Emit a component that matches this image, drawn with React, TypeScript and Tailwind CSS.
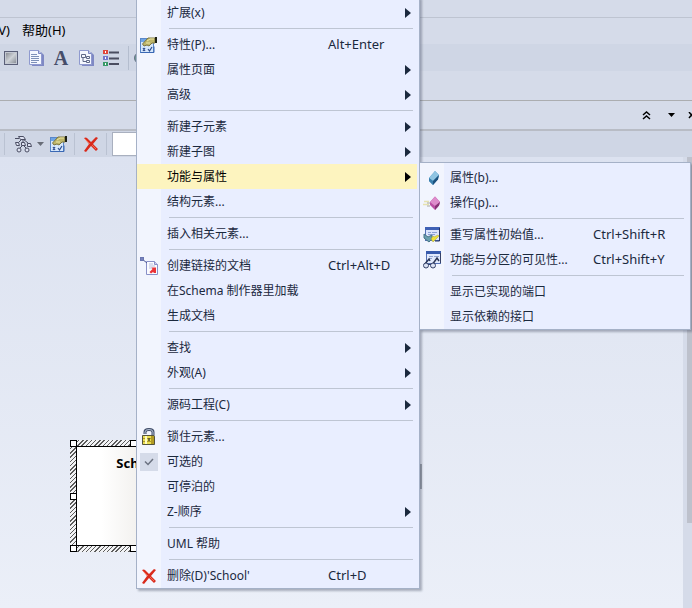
import React from 'react';

interface MenuEntry {
  label: string;
  shortcut?: string;
  submenu?: boolean;
  active?: boolean;
  checked?: boolean;
  icon?: React.ReactNode;
}

const PropertiesIcon = () => (
  <svg className="w-[18px] h-[18px]" viewBox="0 0 18 18">
    <rect x="0.5" y="2.5" width="13" height="14" fill="#d6e7fb" stroke="#5a87c8" />
    <rect x="1" y="3" width="12" height="3" fill="#6ea4e6" />
    <path d="M3 12l2 3M5 12l-2 3M8 13l1.500 2L12 11" stroke="#2c4a8c" fill="none" strokeWidth="1.200" />
    <path d="M2.500 8L8 2h7v5h-3l-3 3-2-1-3 1z" fill="#bdb56a" stroke="#7d7640" />
    <path d="M7 5l3-2h4M6 7h4" stroke="#ece6a4" fill="none" />
    <rect x="15" y="1" width="2" height="6" fill="#1d2014" />
    <path d="M0.500 16.500h13.500v-6" stroke="#3a68b4" fill="none" />
  </svg>
);

const LinkedDocIcon = () => (
  <svg className="w-[18px] h-[18px]" viewBox="0 0 18 18">
    <path d="M6.500 4.500h8l3 3v10h-11z" fill="#fafbff" stroke="#8990c8" />
    <path d="M14.500 4.500v3h3" fill="#c8cdf0" stroke="#8990c8" />
    <path d="M9 7h4M9 9h6M9 11h3" stroke="#b9bfdc" />
    <path d="M2 2l5 4" stroke="#4a5590" />
    <rect x="0.5" y="0.5" width="3" height="3" fill="#7783bd" stroke="#6a76b0" />
    <path d="M16 10.500v5.500h-2l-1-1-2 1.500-1.500-1.500 3-3-1-1.500z" fill="#ea3338" />
  </svg>
);

const LockIcon = () => (
  <svg className="w-[18px] h-[18px]" viewBox="0 0 18 18">
    <path d="M5 6V4q0-2.500 4-2.500T13 4v6" fill="none" stroke="#3f4c68" strokeWidth="3" />
    <path d="M5 6V4q0-2.500 4-2.500T13 4v3" fill="none" stroke="#b4c0d4" />
    <path d="M2.500 7.500h11l1 1v8h-12z" fill="#b39c22" stroke="#55543c" />
    <path d="M3 8h8v8H3z" fill="#eadf52" />
    <path d="M3 10.500h10M3 13.500h10" stroke="#b19b28" />
    <path d="M6 8v8" stroke="#fffcc1" strokeWidth="2" />
    <path d="M9 10v3" stroke="#4b4a30" strokeWidth="1.500" />
  </svg>
);

const DeleteIcon = () => (
  <svg className="w-4 h-4" viewBox="0 0 16 16">
    <path d="M1 2q2-1 3 0l4 4 5-5 2 1-5 6 5 5-2 2-5-5-5 6-2-1 5-7z" fill="#d92a1c" />
    <path d="M2 3l5 5M9 9l4 4" stroke="#f56a50" />
  </svg>
);

const AttributeIcon = () => (
  <svg className="w-[18px] h-[18px]" viewBox="0 0 18 18">
    <path d="M6 9l6-7 4 4-1 4-5 6-4-4z" fill="#4a94c2" />
    <path d="M6 9l6-7 4 4-6 6z" fill="#8fc4e2" />
    <path d="M10 12l6-6-1 4.500-5 5.500z" fill="#1c527f" />
    <path d="M6 9l4 3v4l-4-4z" fill="#3b80ae" />
  </svg>
);

const OperationIcon = () => (
  <svg className="w-[18px] h-[18px]" viewBox="0 0 18 18">
    <path d="M1 7.500h5M0 10.500h6" stroke="#e6e2ae" strokeWidth="1.500" />
    <path d="M4 9h4M4 12h3" stroke="#a9aaa2" />
    <path d="M7 8l5-5.500 5 5.500-1 3.500-4 4.500-5-5z" fill="#bc4fa5" />
    <path d="M7 8l5-5.500L17 8l-5 4z" fill="#dd8ccb" />
    <path d="M12 12l5-4-1 3.500-4 4.500z" fill="#863375" />
  </svg>
);

const InitValueIcon = () => (
  <svg className="w-[18px] h-[18px]" viewBox="0 0 18 18">
    <rect x="2.500" y="1.500" width="14" height="13" fill="#dce5fb" stroke="#5470b4" />
    <rect x="2" y="1" width="15" height="3" fill="#3f61b5" />
    <path d="M5 6.500h3M9 6.500h5M5 8.500h7" stroke="#8ba1d6" />
    <path d="M1 8l4 3 4-2v4l-3 3-5-4z" fill="#6ba0ae" stroke="#4a7488" />
    <path d="M8 13l2 3 6-6-1-1-4 2-1-1z" fill="#ece239" stroke="#a39c3c" strokeWidth="0.500" />
    <path d="M16.500 2v13H12" fill="none" stroke="#253462" />
  </svg>
);

const VisibilityIcon = () => (
  <svg className="w-[18px] h-[18px]" viewBox="0 0 18 18">
    <rect x="3.500" y="0.500" width="14" height="12" fill="#e2eafc" stroke="#5470b4" />
    <rect x="3" y="0" width="15" height="3" fill="#385bac" />
    <path d="M6 5.500h4M11 5.500h5M6 7.500h3" stroke="#91a3cd" />
    <path d="M1 14l5-6 1 2M9 14l5-7 2 3" fill="none" stroke="#2b3554" strokeWidth="1.500" />
    <circle cx="3" cy="14.500" r="2.500" fill="#dce3f4" stroke="#364269" />
    <circle cx="10" cy="14.500" r="2.500" fill="#dce3f4" stroke="#364269" />
    <path d="M5 13.500h3M17.500 2v10" stroke="#364269" />
  </svg>
);

const ShapeIcon = () => (
  <svg className="w-4 h-4" viewBox="0 0 16 16">
    <defs>
      <linearGradient id="metal" x1="0" y1="0" x2="1" y2="1">
        <stop offset="0" stopColor="#8a8e96" />
        <stop offset="0.500" stopColor="#cdd1d6" />
        <stop offset="1" stopColor="#8b9098" />
      </linearGradient>
    </defs>
    <rect x="1.500" y="1.500" width="13" height="13" fill="#c3c8d2" stroke="#5a5f78" />
    <rect x="3" y="3" width="10" height="10" fill="url(#metal)" />
  </svg>
);

const PageIcon = ({ tree }: { tree?: boolean }) => (
  <svg className="w-4 h-4" viewBox="0 0 16 16">
    <path d="M5 2h8l3 3v11H4z" fill="#7f89c4" />
    <path d="M1.500 0.500h9l3 3v11h-12z" fill="#f4f7ff" stroke="#8f9acf" />
    <path d="M10.500 0.500v3h3" fill="#c3cbed" stroke="#7c87c3" />
    {tree ? (
      <path d="M3.500 4.500h4v3h-4zM5 8v3.500h3M8.500 6.500h3v2h-3zM8.500 10.500h3v2h-3z" fill="none" stroke="#5f6988" />
    ) : (
      <path d="M3 4.500h6M3 6.500h8M3 8.500h8M3 10.500h8M3 12.500h6" stroke="#7d90b8" />
    )}
  </svg>
);

const LegendIcon = () => (
  <svg className="w-4 h-4" viewBox="0 0 16 16">
    <rect x="0" y="0" width="5" height="4" fill="#e0453a" />
    <rect x="0" y="6" width="5" height="4" fill="#7478cc" />
    <rect x="0" y="12" width="5" height="4" fill="#3a9a68" />
    <path d="M2.500 1v2M2.500 7v2M2.500 13v2" stroke="#fff" />
    <path d="M6 2.500h10M6 8.500h10M6 14h10" stroke="#4a4d60" strokeWidth="2" />
  </svg>
);

const HierarchyIcon = () => (
  <svg className="w-[18px] h-[18px]" viewBox="0 0 18 18">
    <g fill="#dfe3f2" stroke="#4a4d62">
      <path d="M8 4L4 8M9 4l5 4M9 10l-4 4M9 10l4 4M9 4v5" fill="none" />
      <path d="M4.500 1.500h5l2 3h-5z" />
      <path d="M1 3.500h4" />
      <path d="M1.500 7.500h3l1 3h-3zM7.500 7.500h3l1 3h-4zM13.500 8.500h3l1 3h-4z" />
      <circle cx="5" cy="15" r="2" />
      <circle cx="13" cy="15" r="2" />
    </g>
  </svg>
);

const Caret = () => (
  <svg className="w-[7px] h-1" viewBox="0 0 7 4">
    <path d="M0 0h7L3.500 4z" fill="currentColor" />
  </svg>
);

const mainMenu: MenuEntry[][] = [
  [{ label: '扩展(x)', submenu: true }],
  [
    { label: '特性(P)...', shortcut: 'Alt+Enter', icon: <PropertiesIcon /> },
    { label: '属性页面', submenu: true },
    { label: '高级', submenu: true },
  ],
  [
    { label: '新建子元素', submenu: true },
    { label: '新建子图', submenu: true },
    { label: '功能与属性', submenu: true, active: true },
    { label: '结构元素...' },
  ],
  [{ label: '插入相关元素...' }],
  [
    { label: '创建链接的文档', shortcut: 'Ctrl+Alt+D', icon: <LinkedDocIcon /> },
    { label: '在Schema 制作器里加载' },
    { label: '生成文档' },
  ],
  [
    { label: '查找', submenu: true },
    { label: '外观(A)', submenu: true },
  ],
  [{ label: '源码工程(C)', submenu: true }],
  [
    { label: '锁住元素...', icon: <LockIcon /> },
    { label: '可选的', checked: true },
    { label: '可停泊的' },
    { label: 'Z-顺序', submenu: true },
  ],
  [{ label: 'UML 帮助' }],
  [{ label: "删除(D)'School'", shortcut: 'Ctrl+D', icon: <DeleteIcon /> }],
];

const featureMenu: MenuEntry[][] = [
  [
    { label: '属性(b)...', icon: <AttributeIcon /> },
    { label: '操作(p)...', icon: <OperationIcon /> },
  ],
  [
    { label: '重写属性初始值...', shortcut: 'Ctrl+Shift+R', icon: <InitValueIcon /> },
    { label: '功能与分区的可见性...', shortcut: 'Ctrl+Shift+Y', icon: <VisibilityIcon /> },
  ],
  [{ label: '显示已实现的端口' }, { label: '显示依赖的接口' }],
];

const MenuRow = ({ entry, shortcutWidth }: { entry: MenuEntry; shortcutWidth: string }) => {
  const rowClass = `flex w-full h-[25px] items-center text-left whitespace-nowrap ${
    entry.active ? 'bg-[#fdf4bf] text-black' : ''
  }`;

  if (entry.checked) {
    return (
      <label className={rowClass}>
        <span className="relative w-6 mr-1.5 flex justify-center">
          <input type="checkbox" defaultChecked className="appearance-none w-[18px] h-[18px] bg-[#d5dbe9]" />
          <svg className="absolute top-[5px] w-2.5 h-2" viewBox="0 0 10 8">
            <path d="M1 3.500l3 3L9 1" fill="none" stroke="#6b7280" strokeWidth="1.500" />
          </svg>
        </span>
        {entry.label}
      </label>
    );
  }

  return (
    <button type="button" role="menuitem" className={rowClass}>
      <span className="w-6 mr-1.5 flex shrink-0 justify-center">{entry.icon}</span>
      <span className="flex-1">{entry.label}</span>
      {entry.shortcut && <span className={`text-[13px] ${shortcutWidth}`}>{entry.shortcut}</span>}
      {entry.submenu && (
        <svg className="w-1.5 h-2.5 mr-1.5" viewBox="0 0 6 10">
          <path d="M0 0l6 5-6 5z" fill="currentColor" />
        </svg>
      )}
    </button>
  );
};

const ContextMenu = ({
  groups,
  shortcutWidth,
  className,
}: {
  groups: MenuEntry[][];
  shortcutWidth: string;
  className: string;
}) => (
  <div
    role="menu"
    className={`absolute border border-[#a5b1c7] pt-0.5 pr-0.5 bg-[linear-gradient(to_right,#f2f5fe_24px,#e9eeff_24px)] shadow-[2px_2px_2px_rgba(70,80,100,0.4)] text-[#1b293e] ${className}`}
  >
    {groups.map((group, i) => (
      <React.Fragment key={i}>
        {i > 0 && (
          <div role="separator" className="h-[7px] py-[3px] pl-8 pr-1">
            <div className="h-px bg-[#bec5d3]" />
          </div>
        )}
        {group.map((entry) => (
          <MenuRow key={entry.label} entry={entry} shortcutWidth={shortcutWidth} />
        ))}
      </React.Fragment>
    ))}
  </div>
);

const Handle = ({ className }: { className: string }) => (
  <div className={`absolute w-[7px] h-[7px] border border-black bg-white ${className}`} />
);

const DiagramElement = ({ name }: { name: string }) => (
  <div className="absolute left-[70px] top-[283px] w-[135px] h-[112px] p-[6px] bg-[repeating-linear-gradient(135deg,#5c5c5c_0px,#5c5c5c_1px,#f2f3f5_1px,#f2f3f5_3px)]">
    <div className="h-full border border-black bg-linear-to-r from-white from-20% to-[#dedbd5] pt-2 text-center text-[13px] font-bold text-black">
      {name}
    </div>
    <Handle className="left-0 top-0" />
    <Handle className="left-[60px] top-0" />
    <Handle className="right-0 top-0" />
    <Handle className="left-0 top-[53px]" />
    <Handle className="right-0 top-[53px]" />
    <Handle className="left-0 bottom-0" />
    <Handle className="left-[60px] bottom-0" />
    <Handle className="right-0 bottom-0" />
  </div>
);

export default function App() {
  return (
    <div className="relative flex flex-col min-h-screen overflow-hidden bg-[#d5dbe9] font-['Noto_Sans','Noto_Sans_CJK_SC',sans-serif] text-xs text-[#1b293e]">
      {/* Title strip and menu bar */}
      <div className="h-[18px] border-b border-[#bec4d1]" />
      <nav className="flex items-center h-[26px] gap-3 text-[13px] text-black">
        <button type="button" className="w-2.5 flex justify-end">V)</button>
        <button type="button">帮助(H)</button>
      </nav>

      {/* Main toolbar */}
      <div className="flex items-center h-[27px] pl-[3px] gap-[9px] bg-[#cfd6e5]">
        <button type="button" aria-label="Shape"><ShapeIcon /></button>
        <button type="button" aria-label="Note"><PageIcon /></button>
        <button type="button" className="w-4 text-center font-['Liberation_Serif',serif] text-xl leading-4 font-bold text-[#464d6a]">A</button>
        <button type="button" aria-label="Document"><PageIcon tree /></button>
        <button type="button" aria-label="Legend"><LegendIcon /></button>
        <div className="w-px h-6 bg-[#b4bdce]" />
        <div className="w-3.5 h-3 rounded-full border border-[#68708a] bg-[#6d9a90] -ml-1" />
      </div>
      <div className="h-[30px] border-b border-[#abadb0]" />

      {/* Caption bar of the diagram */}
      <div className="flex items-center justify-end h-[30px] border-b-2 border-[#b8bcc5] gap-[17px] text-black">
        <button type="button" aria-label="Collapse">
          <svg className="w-[9px] h-[9px]" viewBox="0 0 9 9">
            <path d="M1 4l3.500-3L8 4M1 8l3.500-3L8 8" fill="none" stroke="currentColor" strokeWidth="1.500" />
          </svg>
        </button>
        <button type="button" aria-label="Window list"><Caret /></button>
        <button type="button" aria-label="Close" className="w-1 overflow-hidden -ml-1">
          <svg className="w-[7px] h-[7px] max-w-none" viewBox="0 0 7 7">
            <path d="M1 0l5 6M6 0L1 6" stroke="currentColor" strokeWidth="1.500" />
          </svg>
        </button>
      </div>

      {/* Diagram toolbar */}
      <div className="flex items-center h-[26px] bg-[#cfd6e5]">
        <div className="w-px h-[22px] ml-1 bg-[#bac2d2]" />
        <button type="button" className="flex items-center ml-[9px] gap-[5px] text-[#686d78]" aria-label="Hierarchy">
          <HierarchyIcon />
          <Caret />
        </button>
        <button type="button" className="ml-1.5" aria-label="Properties"><PropertiesIcon /></button>
        <div className="w-px h-[22px] ml-1.5 bg-[#bac2d2]" />
        <button type="button" className="ml-2" aria-label="Delete"><DeleteIcon /></button>
        <div className="w-px h-[22px] ml-[7px] bg-[#bac2d2]" />
        <input aria-label="Name" className="w-28 h-6 ml-[5px] border border-[#a9b0bf] bg-white" />
      </div>

      {/* Diagram canvas */}
      <main className="relative flex flex-1 bg-linear-to-b from-[#dce2f0] to-[#ebeff8]">
        <div className="flex-1">
          <DiagramElement name="School" />
          <div className="absolute left-[419px] top-[307px] w-[3px] h-[25px] bg-[#9da3ad]" />
        </div>
        <div className="w-[9px] pl-1 bg-[#d5dbe9]">
          <div className="h-[366px] bg-[#bdc1cc]" />
        </div>
      </main>

      <ContextMenu groups={mainMenu} shortcutWidth="w-[89px]" className="left-[136px] -top-[3px] w-[284px]" />
      <ContextMenu groups={featureMenu} shortcutWidth="w-[95px]" className="left-[419px] top-[162px] w-[272px]" />
    </div>
  );
}
